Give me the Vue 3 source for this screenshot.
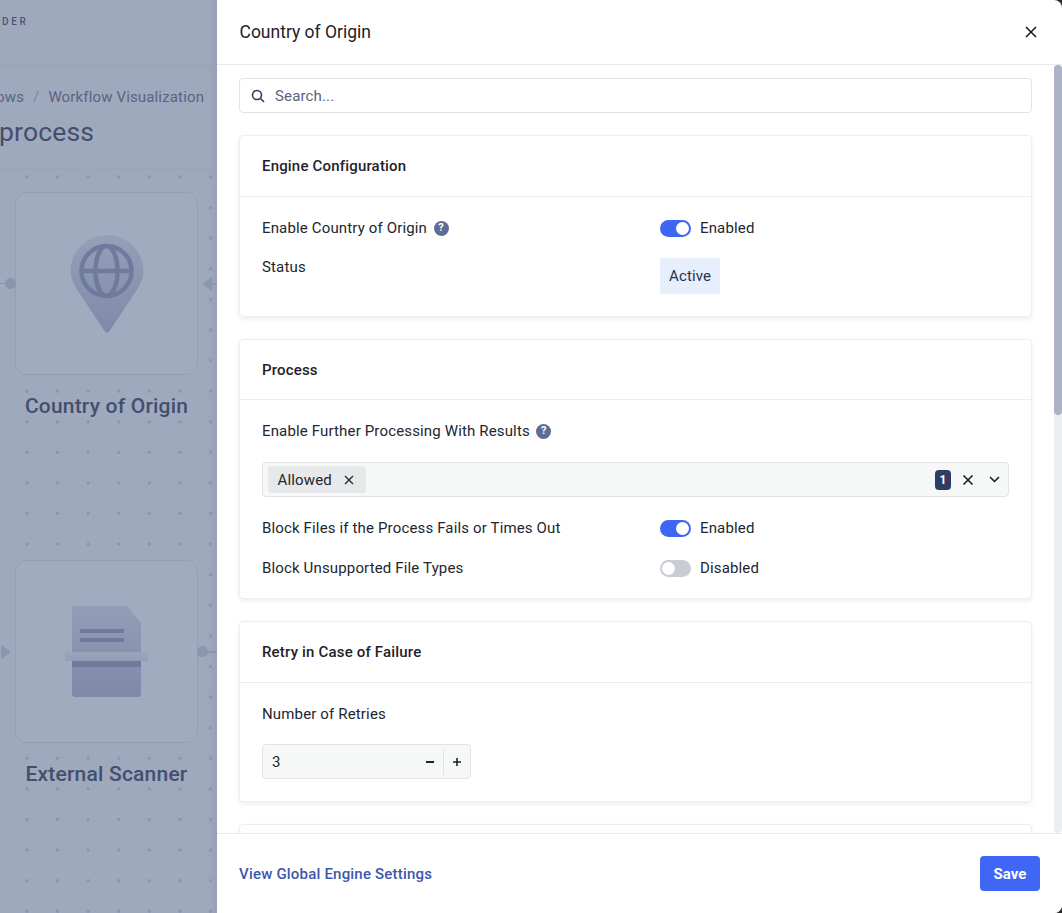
<template>
  <div class="screen">
    <div class="backdrop">
      <div class="topbar"><span class="brand">DER</span></div>
      <div class="pagehead">
        <div class="crumbs">
          <span>ows</span>
          <span class="sep">/</span>
          <span>Workflow Visualization</span>
        </div>
        <div class="pagetitle">process</div>
      </div>
      <div class="canvas">
        <div class="node node-top">
          <div class="tile">
            <svg width="76" height="100" viewBox="0 0 76 100">
              <defs>
                <linearGradient id="pinFill" x1="0" y1="0" x2="0" y2="1">
                  <stop offset="0" stop-color="#959fb8" />
                  <stop offset="1" stop-color="#7e8aa8" />
                </linearGradient>
              </defs>
              <path d="M38 1C18 1 1.500 17 1.500 37c0 8 4 15 8 21l26 39c1.500 2 3.500 2 5 0l26-39c4-6 8-13 8-21C74.500 17 58 1 38 1z" fill="url(#pinFill)" />
              <g fill="none" stroke="#6e7b9d" stroke-width="4.500">
                <circle cx="37.500" cy="37" r="25" />
                <ellipse cx="37.500" cy="37" rx="11" ry="25" />
                <path d="M12.500 37h50" />
              </g>
            </svg>
            <span class="port port-in"></span>
            <span class="arrow-right"></span>
          </div>
          <div class="nodename">Country of Origin</div>
        </div>
        <div class="node node-bottom">
          <div class="tile">
            <svg width="84" height="96" viewBox="0 0 84 96">
              <defs>
                <linearGradient id="docFill" x1="0" y1="0" x2="0" y2="1">
                  <stop offset="0" stop-color="#939eb8" />
                  <stop offset="1" stop-color="#7d89a8" />
                </linearGradient>
                <linearGradient id="barFill" x1="0" y1="0" x2="0" y2="1">
                  <stop offset="0" stop-color="#9ca6bd" />
                  <stop offset="1" stop-color="#929db6" />
                </linearGradient>
              </defs>
              <path d="M7 5a3 3 0 0 1 3-3h52l14 17v71a3 3 0 0 1-3 3H10a3 3 0 0 1-3-3z" fill="url(#docFill)" />
              <rect x="15" y="25" width="44" height="4" fill="#6e7b9d" />
              <rect x="15" y="34" width="44" height="4" fill="#6e7b9d" />
              <rect x="7" y="57" width="69" height="6" fill="#6e7b9d" />
              <rect x="0.750" y="48.250" width="81.500" height="8.500" fill="url(#barFill)" stroke="#919cb5" stroke-width="0.500" />
            </svg>
            <span class="arrow-left"></span>
            <span class="port port-out"></span>
          </div>
          <div class="nodename">External Scanner</div>
        </div>
      </div>
    </div>

    <aside class="drawer">
      <header class="drawer-head">
        <h2>Country of Origin</h2>
        <button class="close" aria-label="Close">
          <svg width="12" height="12" viewBox="0 0 12 12"><path d="M1 1l10 10M11 1L1 11" stroke="#14161c" stroke-width="1.500" fill="none" /></svg>
        </button>
      </header>

      <div class="drawer-body">
        <div class="search">
          <svg width="14" height="14" viewBox="0 0 14 14" fill="none" stroke="#2d3a5c" stroke-width="1.600"><circle cx="6" cy="6" r="4.500" /><path d="M9.500 9.500L13 13" /></svg>
          <span>Search...</span>
        </div>

        <section class="card card-config">
          <div class="card-head">Engine Configuration</div>
          <div class="card-content">
            <div class="row row-first">
              <div class="label">Enable Country of Origin <span class="help">?</span></div>
              <div class="value">
                <span class="toggle on"></span><span>Enabled</span>
              </div>
            </div>
            <div class="row row-status">
              <div class="label">Status</div>
              <div class="value"><span class="badge">Active</span></div>
            </div>
          </div>
        </section>

        <section class="card card-process">
          <div class="card-head process-head">Process</div>
          <div class="card-content">
            <div class="label label-alone">Enable Further Processing With Results <span class="help">?</span></div>
            <div class="multi">
              <span class="chip">Allowed
                <svg width="10" height="10" viewBox="0 0 10 10"><path d="M1 1l8 8M9 1L1 9" stroke="#2a2e38" stroke-width="1.400" /></svg>
              </span>
              <span class="multi-tools">
                <span class="count">1</span>
                <svg width="10" height="10" viewBox="0 0 10 10"><path d="M0.500 0.500l9 9M9.500 0.500l-9 9" stroke="#14161c" stroke-width="1.500" /></svg>
                <svg class="chev" width="11" height="7" viewBox="0 0 11 7" fill="none"><path d="M1 1l4.500 4.500L10 1" stroke="#14161c" stroke-width="1.500" /></svg>
              </span>
            </div>
            <div class="row row-block">
              <div class="label">Block Files if the Process Fails or Times Out</div>
              <div class="value"><span class="toggle on"></span><span>Enabled</span></div>
            </div>
            <div class="row row-block">
              <div class="label">Block Unsupported File Types</div>
              <div class="value"><span class="toggle"></span><span>Disabled</span></div>
            </div>
          </div>
        </section>

        <section class="card card-retry">
          <div class="card-head">Retry in Case of Failure</div>
          <div class="card-content">
            <div class="label label-alone">Number of Retries</div>
            <div class="stepper">
              <span class="step-value">3</span>
              <span class="step-btn">
                <svg width="8" height="8" viewBox="0 0 8 8"><path d="M0 4h8" stroke="#1f2229" stroke-width="2" /></svg>
              </span>
              <span class="step-sep"></span>
              <span class="step-btn step-plus">
                <svg width="8" height="8" viewBox="0 0 8 8"><path d="M0 4h8M4 0v8" stroke="#1f2229" stroke-width="1.600" /></svg>
              </span>
            </div>
          </div>
        </section>

        <section class="card card-next"></section>

        <div class="scrollbar"><div class="thumb"></div></div>
      </div>

      <footer class="drawer-foot">
        <a class="global-link">View Global Engine Settings</a>
        <button class="save">Save</button>
      </footer>
    </aside>
  </div>
</template>

<script setup>
</script>

<style>
html,
body {
  margin: 0;
  background: #2a2a2a;
}
</style>

<style scoped>
* {
  box-sizing: border-box;
}

.screen {
  display: flex;
  width: 1062px;
  height: 913px;
  overflow: hidden;
  font-family: Roboto, "Liberation Sans", sans-serif;
  font-size: 15px;
  letter-spacing: 0.15px;
  color: #23262f;
}

.backdrop {
  width: 217px;
  flex: none;
  display: flex;
  flex-direction: column;
  background: #9fa9be;
  overflow: hidden;
  box-shadow: inset -10px 0 10px -8px rgba(80, 92, 125, 0.18);
}

.topbar {
  height: 66px;
  flex: none;
  border-bottom: 1px solid #98a2b8;
}

.brand {
  display: block;
  margin: 15px 0 0 2px;
  font-size: 10px;
  font-weight: 500;
  letter-spacing: 2.600px;
  line-height: 14px;
  color: #4c5772;
}

.pagehead {
  height: 104px;
  flex: none;
  border-bottom: 1px solid #98a2b8;
}

.crumbs {
  display: flex;
  gap: 9px;
  margin: 21px 0 0 -4px;
  line-height: 20px;
  color: #59647f;
  white-space: nowrap;
}

.sep {
  color: #7d88a3;
}

.pagetitle {
  margin: 9px 0 0 -1px;
  font-size: 26.500px;
  line-height: 32px;
  color: #434f6c;
}

.canvas {
  flex: 1;
  background-image: radial-gradient(circle, #8893ac 1.300px, transparent 1.600px);
  background-size: 30.600px 30.600px;
  background-position: 11.700px -8.300px;
}

.node {
  display: flex;
  flex-direction: column;
  align-items: center;
  width: 183px;
  margin-left: 15px;
}

.node-top {
  margin-top: 22px;
}

.node-bottom {
  margin-top: 140px;
}

.tile {
  position: relative;
  display: flex;
  align-items: center;
  justify-content: center;
  width: 183px;
  height: 183px;
  border: 1px solid #949fb6;
  border-radius: 12px;
  background: #a1abc0;
}

.nodename {
  margin-top: 17px;
  font-size: 21px;
  font-weight: 500;
  letter-spacing: 0.2px;
  line-height: 28px;
  color: #434f6c;
  white-space: nowrap;
}

.port {
  position: absolute;
  top: 50%;
  width: 11px;
  height: 11px;
  margin-top: -6px;
  border-radius: 50%;
  background: #8a95ae;
}

.port-in {
  left: -11px;
}

.port-in::before {
  content: "";
  position: absolute;
  left: -10px;
  top: 5px;
  width: 12px;
  height: 1px;
  background: #8a95ae;
}

.port-out {
  right: -11px;
}

.port-out::after {
  content: "";
  position: absolute;
  right: -12px;
  top: 5px;
  width: 13px;
  height: 2px;
  background: #8a95ae;
}

.arrow-right {
  position: absolute;
  right: -15px;
  top: 50%;
  margin-top: -7px;
  border-style: solid;
  border-width: 7px 10px 7px 0;
  border-color: transparent #8a95ae transparent transparent;
}

.arrow-right::after {
  content: "";
  position: absolute;
  left: 10px;
  top: -1px;
  width: 10px;
  height: 2px;
  background: #8a95ae;
}

.arrow-left {
  position: absolute;
  left: -15px;
  top: 50%;
  margin-top: -7px;
  border-style: solid;
  border-width: 7px 0 7px 10px;
  border-color: transparent transparent transparent #8a95ae;
}

.drawer {
  flex: 1;
  display: flex;
  flex-direction: column;
  background: #fff;
  border-top-right-radius: 8px;
  border-bottom-right-radius: 8px;
  overflow: hidden;
}

.drawer-head {
  height: 65px;
  flex: none;
  display: flex;
  align-items: center;
  justify-content: space-between;
  padding: 0 25px 0 22.500px;
  border-bottom: 1px solid #e8e9ec;
}

.drawer-head h2 {
  margin: 0;
  font-size: 17.500px;
  font-weight: 400;
  letter-spacing: 0;
  color: #1f2229;
}

.close {
  display: flex;
  padding: 0;
  border: 0;
  background: none;
}

.drawer-body {
  position: relative;
  flex: 1;
  min-height: 0;
  overflow: hidden;
  padding: 13px 30px 0 22px;
}

.search {
  display: flex;
  align-items: center;
  gap: 10px;
  height: 35px;
  padding-left: 11px;
  border: 1px solid #e1e3e6;
  border-radius: 4px;
  color: #59647f;
}

.card {
  margin-top: 22px;
  border: 1px solid #eceef0;
  border-radius: 4px;
  background: #fff;
  box-shadow: 0 2px 4px rgba(30, 40, 70, 0.08);
}

.card-head {
  height: 61px;
  display: flex;
  align-items: center;
  padding-left: 22px;
  border-bottom: 1px solid #eceef0;
  font-weight: 500;
  letter-spacing: 0.18px;
  color: #1f2229;
}

.process-head {
  height: 60px;
}

.card-content {
  padding: 0 22px;
}

.card-config {
  height: 182px;
}

.card-process {
  height: 260px;
}

.card-retry {
  height: 181px;
}

.card-next {
  height: 60px;
}

.row {
  display: grid;
  grid-template-columns: 398px 1fr;
}

.row-first {
  padding-top: 21px;
  align-items: center;
}

.row-status {
  margin-top: 19px;
  align-items: start;
}

.row-block {
  height: 40px;
  align-items: center;
}

.multi + .row-block {
  margin-top: 11px;
}

.label {
  display: flex;
  align-items: center;
  gap: 6.500px;
  line-height: 20px;
}

.label-alone {
  padding-top: 21px;
}

.value {
  display: flex;
  align-items: center;
  gap: 9px;
}

.help {
  display: inline-flex;
  align-items: center;
  justify-content: center;
  width: 15px;
  height: 15px;
  border-radius: 50%;
  background: #5f6d96;
  color: #fff;
  font-size: 11px;
  font-weight: 700;
}

.toggle {
  position: relative;
  width: 31px;
  height: 17px;
  border-radius: 9px;
  background: #c8ccd4;
}

.toggle::after {
  content: "";
  position: absolute;
  top: 2px;
  left: 2px;
  width: 13px;
  height: 13px;
  border-radius: 50%;
  background: #fff;
}

.toggle.on {
  background: #3f66f0;
}

.toggle.on::after {
  left: 16px;
}

.badge {
  display: block;
  margin-top: 1px;
  padding: 0 9px;
  height: 36px;
  line-height: 36px;
  background: #e8effc;
  color: #27314f;
}

.multi {
  display: flex;
  align-items: center;
  justify-content: space-between;
  height: 35px;
  margin-top: 21px;
  padding: 0 8px 0 5px;
  border: 1px solid #e1e3e6;
  border-radius: 4px;
  background: #f6f8f8;
}

.chip {
  display: flex;
  align-items: center;
  gap: 12px;
  height: 27px;
  padding: 0 12px 0 9.500px;
  border-radius: 3px;
  background: #e6e8e9;
}

.multi-tools {
  display: flex;
  align-items: center;
  gap: 12px;
}

.count {
  width: 16px;
  height: 20px;
  border-radius: 4px;
  background: #2f3d63;
  color: #fff;
  font-size: 12px;
  font-weight: 700;
  line-height: 20px;
  text-align: center;
}

.chev {
  margin-left: 4px;
}

.stepper {
  display: flex;
  align-items: center;
  width: 209px;
  height: 35px;
  margin-top: 20px;
  border: 1px solid #e1e3e6;
  border-radius: 4px;
  background: #f6f8f8;
}

.step-value {
  flex: 1;
  padding-left: 9px;
}

.step-btn {
  display: flex;
  align-items: center;
  justify-content: center;
  width: 27px;
  height: 26px;
}

.step-plus {
  width: 26px;
}

.step-sep {
  width: 1px;
  height: 26px;
  background: #e1e3e6;
}

.scrollbar {
  position: absolute;
  top: 0;
  right: 0;
  bottom: 0;
  width: 8px;
  border-radius: 4px;
  background: #eceef1;
}

.thumb {
  height: 350px;
  border-radius: 4px;
  background: #adb3c7;
}

.drawer-foot {
  height: 80px;
  flex: none;
  display: flex;
  align-items: center;
  justify-content: space-between;
  padding: 0 22px;
  border-top: 1px solid #e8e9ec;
  background: #fff;
}

.global-link {
  font-weight: 500;
  letter-spacing: 0.2px;
  color: #3d57ac;
}

.save {
  width: 60px;
  height: 35px;
  border: 0;
  border-radius: 4px;
  background: #4066f5;
  color: #fff;
  font-family: inherit;
  font-size: 15px;
  font-weight: 700;
}
</style>
